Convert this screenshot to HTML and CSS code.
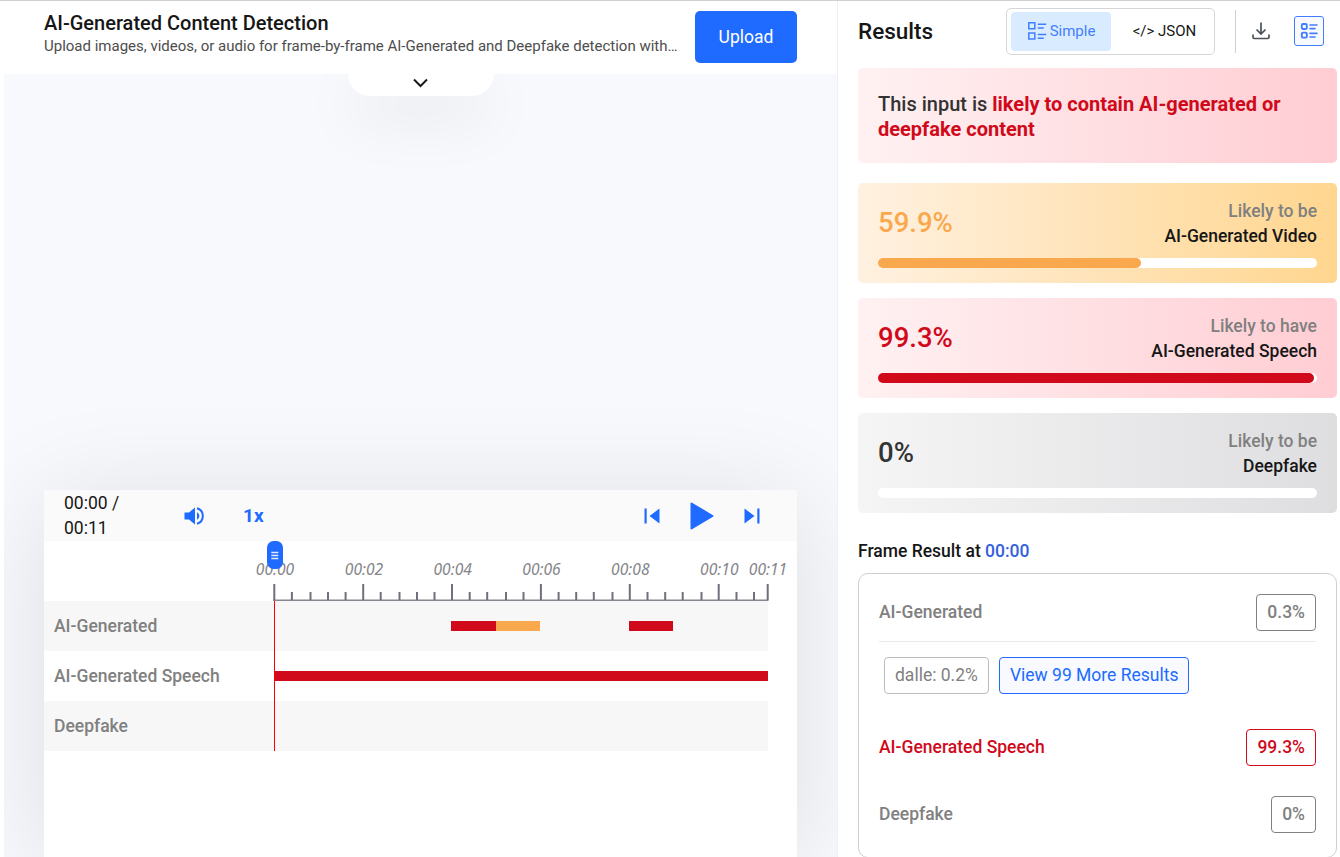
FILE: index.html
```html
<!DOCTYPE html>
<html lang="en">
<head>
    <meta charset="UTF-8">
    <meta name="viewport" content="width=device-width, initial-scale=1.0">
    <title>AI-Generated Content Detection</title>
    <link rel="stylesheet" href="styles.css">
</head>
<body>
    <svg width="0" height="0" class="defs">
        <symbol id="icon-list" viewBox="0 0 20 20">
            <path d="M1.8 1.8h6v6h-6zM1.8 12h6v6h-6zM10.8 3.2h8.4M10.8 7h6M10.8 13.4h8.4M10.8 17.2h6" fill="none" stroke="currentColor" stroke-width="1.5"/>
        </symbol>
        <symbol id="icon-list-round" viewBox="0 0 18 18">
            <path d="M10 3h7M10 6.6h5M10 11.4h7M10 15h5" fill="none" stroke="currentColor" stroke-width="1.6" stroke-linecap="round"/>
            <rect x="1.8" y="2" width="5" height="5" rx="1.2" fill="none" stroke="currentColor" stroke-width="1.9"/>
            <rect x="1.8" y="10.6" width="5" height="5" rx="1.2" fill="none" stroke="currentColor" stroke-width="1.9"/>
        </symbol>
    </svg>

    <div class="page">
        <main class="demo">
            <header class="demo-header">
                <div class="demo-title">
                    <h1>AI-Generated Content Detection</h1>
                    <p>Upload images, videos, or audio for frame-by-frame AI-Generated and Deepfake detection with…</p>
                </div>
                <button class="upload">Upload</button>
            </header>

            <div class="stage">
                <button class="drawer-toggle">
                    <svg width="16" height="10" viewBox="0 0 16 10"><path d="M1 1.500L7.500 8l6.500-6.500" fill="none" stroke="#1a1a1a" stroke-width="2"/></svg>
                </button>

                <section class="player">
                    <div class="controls">
                        <span class="time">00:00 / 00:11</span>
                        <svg class="volume" width="22" height="20" viewBox="0 0 22 20">
                            <path d="M0.500 6.500H5L11 1.500V18.500L5 13.500H0.500z" fill="#206bff"/>
                            <path d="M13 6.200v7.600a4.200 4.200 0 0 0 0-7.600z" fill="#206bff"/>
                            <path d="M13 2.300a8 8 0 0 1 0 15.400" fill="none" stroke="#206bff" stroke-width="2"/>
                        </svg>
                        <span class="speed">1x</span>
                        <div class="transport">
                            <svg width="16" height="16" viewBox="0 0 16 16"><path d="M0.500 0.500h2.200v15H0.500zM15.500 0.500v15L5.500 8z" fill="#206bff"/></svg>
                            <svg width="24" height="28" viewBox="0 0 24 28"><path d="M1.500 1.500v25L22.500 14z" fill="#206bff" stroke="#206bff" stroke-width="2" stroke-linejoin="round"/></svg>
                            <svg width="16" height="16" viewBox="0 0 16 16"><path d="M13.300 0.500h2.200v15h-2.200zM0.500 0.500v15L10.500 8z" fill="#206bff"/></svg>
                        </div>
                    </div>

                    <div class="timeline">
                        <svg class="ruler" width="540" height="60.500" viewBox="0 0 540 60.500">
                            <g class="ruler-labels">
                                <text x="21">00:00</text>
                                <text x="110">00:02</text>
                                <text x="198.700">00:04</text>
                                <text x="287.500">00:06</text>
                                <text x="376.300">00:08</text>
                                <text x="465.300">00:10</text>
                                <text x="514">00:11</text>
                            </g>
                            <path class="ruler-base" d="M19 59.200H514.500"/>
                            <path class="ruler-ticks" d="M20.300 43v16M109.200 43v16M198 43v16M286.900 43v16M375.800 43v16M464.700 43v16M513.700 43v16"/>
                            <path class="ruler-ticks" d="M37.900 51v8M56.500 51v8M74 51v8M91.600 51v8M126.700 51v8M145.500 51v8M163 51v8M180.500 51v8M215.700 51v8M233.200 51v8M252 51v8M269.500 51v8M304.600 51v8M322.200 51v8M339.800 51v8M358.500 51v8M393.500 51v8M411.200 51v8M428.700 51v8M447.500 51v8M482.500 51v8M500 51v8"/>
                        </svg>
                        <div class="row shaded">
                            <span class="row-name">AI-Generated</span>
                            <div class="track">
                                <i class="seg red" style="left: 35.800%; width: 9.100%"></i>
                                <i class="seg orange" style="left: 44.900%; width: 9%"></i>
                                <i class="seg red" style="left: 71.800%; width: 9%"></i>
                            </div>
                        </div>
                        <div class="row">
                            <span class="row-name">AI-Generated Speech</span>
                            <div class="track">
                                <i class="seg red" style="left: 0; width: 100%"></i>
                            </div>
                        </div>
                        <div class="row shaded">
                            <span class="row-name">Deepfake</span>
                            <div class="track"></div>
                        </div>
                        <div class="playhead">
                            <svg width="16" height="28" viewBox="0 0 16 28">
                                <rect width="16" height="28" rx="6.500" fill="#206bff"/>
                                <path d="M4.300 11.500h7M4.300 14.500h7M4.300 17.500h7" stroke="#dfe9ff" stroke-width="1.700"/>
                            </svg>
                        </div>
                    </div>
                </section>
            </div>
        </main>

        <aside class="results">
            <header class="results-header">
                <h2>Results</h2>
                <div class="view-switch">
                    <button class="view active"><svg width="20" height="20"><use href="#icon-list"/></svg>Simple</button>
                    <button class="view">&lt;/&gt; JSON</button>
                </div>
                <div class="actions">
                    <svg width="18" height="18" viewBox="0 0 18 18" fill="none" stroke="#495057" stroke-width="1.700">
                        <path d="M9 0.500V12M4.500 7.500L9 12l4.500-4.500"/>
                        <path d="M1 12.500v2.700q0 1.300 1.300 1.300h13.400q1.300 0 1.300-1.300v-2.700"/>
                    </svg>
                    <button class="panel-toggle"><svg width="18" height="18"><use href="#icon-list-round"/></svg></button>
                </div>
            </header>

            <div class="verdict">This input is <strong>likely to contain AI-generated or deepfake content</strong></div>

            <div class="card warn">
                <div class="card-info">
                    <span class="percent">59.9%</span>
                    <p>Likely to be<b>AI-Generated Video</b></p>
                </div>
                <div class="bar"><div class="fill" style="width: 59.900%"></div></div>
            </div>
            <div class="card danger">
                <div class="card-info">
                    <span class="percent">99.3%</span>
                    <p>Likely to have<b>AI-Generated Speech</b></p>
                </div>
                <div class="bar"><div class="fill" style="width: 99.300%"></div></div>
            </div>
            <div class="card neutral">
                <div class="card-info">
                    <span class="percent">0%</span>
                    <p>Likely to be<b>Deepfake</b></p>
                </div>
                <div class="bar"><div class="fill" style="width: 0%"></div></div>
            </div>

            <h3>Frame Result at <span>00:00</span></h3>
            <div class="frame-box">
                <div class="frame-row">
                    <span>AI-Generated</span>
                    <span class="chip">0.3%</span>
                </div>
                <div class="models">
                    <span class="chip light">dalle: 0.2%</span>
                    <button class="chip more">View 99 More Results</button>
                </div>
                <div class="frame-row hit">
                    <span>AI-Generated Speech</span>
                    <span class="chip">99.3%</span>
                </div>
                <div class="frame-row">
                    <span>Deepfake</span>
                    <span class="chip">0%</span>
                </div>
            </div>
        </aside>
    </div>
</body>
</html>
```

FILE: styles.css
```css
* {
    box-sizing: border-box;
}
body {
    margin: 0;
    height: 857px;
    overflow: hidden;
    font-family: Roboto, sans-serif;
    font-size: 17.5px;
    line-height: 25px;
    color: #161616;
    background: #fff;
}
h1, h2, h3, p {
    margin: 0;
    font-weight: 500;
}
button {
    font-family: inherit;
    padding: 0;
    border: 0;
    background: none;
}
svg {
    display: block;
    flex-shrink: 0;
}
.defs {
    position: absolute;
}
.page {
    display: flex;
    height: 857px;
    border-top: 1px solid #d0d0d0;
}

/* left side */
.demo {
    display: flex;
    flex-direction: column;
    width: 834px;
    margin-left: 4px;
    border-right: 1px solid #edf0f9;
}
.demo-header {
    display: flex;
    justify-content: space-between;
    height: 72.5px;
    padding: 10.4px 40px 0;
    flex-shrink: 0;
}
.demo-title h1 {
    font-size: 20px;
    line-height: 25px;
}
.demo-title p {
    font-size: 15px;
    font-weight: 400;
    line-height: 20px;
    color: #4d4d4d;
    white-space: nowrap;
}
.upload {
    width: 102px;
    height: 52px;
    border-radius: 5px;
    background: #206bff;
    color: #fff;
    font-size: 17.5px;
}
.stage {
    flex: 1;
    display: flex;
    flex-direction: column;
    align-items: center;
    justify-content: space-between;
    min-height: 0;
    background: #f7f9fd;
    overflow: hidden;
}
.drawer-toggle {
    display: flex;
    justify-content: center;
    width: 146px;
    height: 22.5px;
    padding-top: 4px;
    border-radius: 0 0 24px 24px;
    background: #fff;
    box-shadow: 0 20px 60px rgba(0, 0, 0, 0.1);
}
.player {
    width: 753px;
    height: 367px;
    background: #fff;
    box-shadow: 0 10px 100px rgba(0, 0, 0, 0.11);
}
.controls {
    display: flex;
    align-items: center;
    height: 50.5px;
    padding: 0 37px 0 20px;
    background: #fafafa;
}
.time {
    width: 80px;
    padding-top: 2px;
}
.volume {
    margin: 2px 0 0 39.5px;
}
.speed {
    margin: 1px 0 0 37.5px;
    font-size: 19px;
    font-weight: 700;
    color: #206bff;
}
.transport {
    display: flex;
    align-items: center;
    gap: 30px;
    margin: 1px 0 0 auto;
}
.timeline {
    position: relative;
}
.ruler {
    margin-left: 210px;
}
.ruler-labels {
    font-family: "Noto Sans", sans-serif;
    font-size: 15.6px;
    font-style: italic;
    text-anchor: middle;
    fill: #85858a;
}
.ruler-labels text {
    transform: translateY(34px);
}
.ruler-base {
    stroke: #85868e;
    stroke-width: 1.5;
}
.ruler-ticks {
    fill: none;
    stroke: #6e707a;
    stroke-width: 2;
}
.row {
    display: flex;
    align-items: center;
    width: 724px;
    height: 50px;
    padding-left: 10px;
}
.row.shaded {
    background: #f7f7f7;
}
.row-name {
    width: 220px;
    padding-top: 1px;
    font-weight: 500;
    color: #808080;
}
.track {
    position: relative;
    flex: 1;
    height: 10px;
}
.seg {
    position: absolute;
    top: 0;
    height: 10px;
}
.red {
    background: #d0091b;
}
.orange {
    background: #faa84d;
}
.playhead {
    position: absolute;
    top: 0;
    left: 223px;
}
.playhead::after {
    content: "";
    position: absolute;
    top: 60.5px;
    left: 7px;
    width: 1px;
    height: 150px;
    background: #ff0000;
}

/* right side */
.results {
    width: 479px;
    margin-left: 20px;
}
.results-header {
    display: flex;
    align-items: center;
    height: 67.4px;
    padding: 0 13px 7px 0;
}
.results-header h2 {
    width: 148px;
    font-size: 22.5px;
}
.view-switch {
    display: flex;
    width: 209px;
    height: 47px;
    padding: 3px 3px 3px 4px;
    border: 1.25px solid #d6d6d6;
    border-radius: 5px;
}
.view {
    display: flex;
    align-items: center;
    justify-content: center;
    gap: 3px;
    flex: 0 0 100px;
    border-radius: 4px;
    font-size: 15px;
    color: #161616;
}
.view.active {
    background: #d9ecff;
    color: #437dff;
}
.view:last-child {
    flex-basis: 107px;
}
.actions {
    display: flex;
    align-items: center;
    justify-content: space-between;
    width: 89px;
    height: 43px;
    margin-left: auto;
    padding-left: 16px;
    border-left: 1px solid #d0d0d0;
}
.panel-toggle {
    display: flex;
    align-items: center;
    justify-content: center;
    width: 30px;
    height: 30px;
    border: 1.5px solid #437dff;
    border-radius: 3px;
    background: #f8faff;
    color: #437dff;
}
.verdict {
    height: 95px;
    margin-bottom: 20px;
    padding: 23.2px 20px 0;
    border-radius: 5px;
    background: linear-gradient(90deg, #fff1f2, #ffcdd3);
    font-size: 20px;
    font-weight: 500;
    color: #333;
}
.verdict strong {
    font-weight: 700;
    color: #d0091b;
}
.card {
    height: 100px;
    margin-bottom: 15px;
    padding: 15px 20px;
    border-radius: 5px;
}
.card-info {
    display: flex;
    justify-content: space-between;
    height: 60px;
}
.percent {
    padding-top: 12px;
    font-size: 27.5px;
    font-weight: 500;
}
.card p {
    padding-top: 0.6px;
    text-align: right;
    color: #808080;
}
.card b {
    display: block;
    font-weight: 500;
    color: #161616;
}
.bar {
    height: 10px;
    border-radius: 5px;
    background: #fff;
}
.fill {
    height: 10px;
    border-radius: 5px;
}
.warn {
    background: linear-gradient(90deg, #fff1e1, #ffd68f);
}
.warn .percent {
    color: #faa84d;
}
.warn .fill {
    background: #faa84d;
}
.danger {
    background: linear-gradient(90deg, #fff1f2, #ffcdd3);
}
.danger .percent {
    color: #d0091b;
}
.danger .fill {
    background: #d0091b;
}
.neutral {
    background: linear-gradient(90deg, #f5f5f6, #dedee0);
}
.neutral .percent {
    color: #333;
}
h3 {
    margin-top: 25px;
    padding-top: 0.6px;
    font-size: 17.5px;
}
h3 span {
    color: #3461dd;
}
.frame-box {
    height: 285px;
    margin-top: 9.4px;
    padding: 0 20px;
    border: 1px solid #cfcfcf;
    border-radius: 10px;
}
.frame-row {
    display: flex;
    align-items: center;
    justify-content: space-between;
    height: 67px;
    font-weight: 500;
    color: #808080;
}
.frame-row:first-child {
    height: 68px;
    padding-top: 10px;
    border-bottom: 1px solid #e9e9e9;
}
.chip {
    height: 37px;
    padding: 5px 10px;
    border: 1px solid #808080;
    border-radius: 4px;
    font-size: 17.5px;
    line-height: 25px;
}
.models {
    display: flex;
    gap: 10px;
    height: 72px;
    padding: 15px 5px 0;
}
.chip.light {
    border-color: #bcbcbc;
    color: #808080;
}
.chip.more {
    border-color: #206bff;
    background: #f8faff;
    color: #206bff;
}
.frame-row.hit {
    color: #d0091b;
}
.hit .chip {
    border-color: #d0091b;
}
```
